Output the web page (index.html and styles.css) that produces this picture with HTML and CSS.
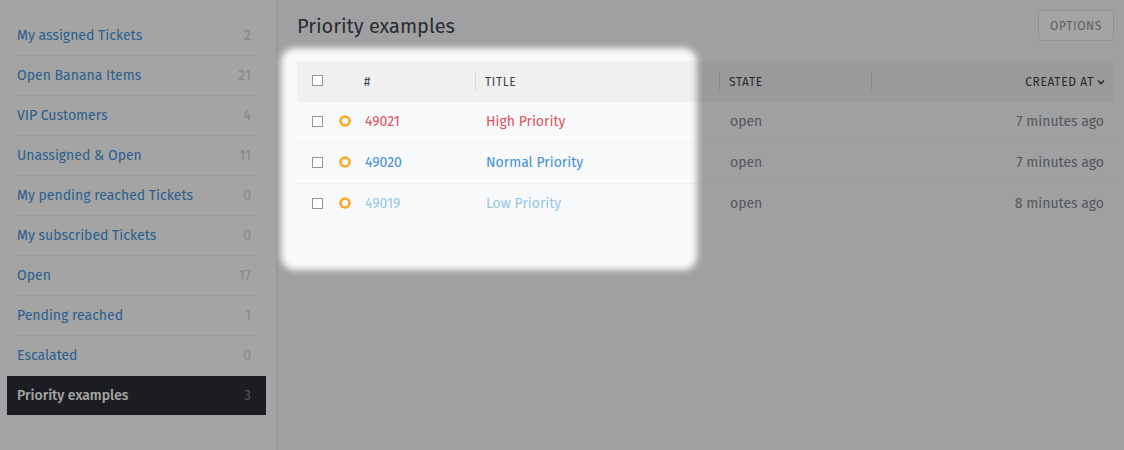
FILE: index.html
```html
<!DOCTYPE html>
<html lang="en">
<head>
<meta charset="utf-8">
<meta name="viewport" content="width=device-width, initial-scale=1">
<title>Priority examples</title>
<link rel="stylesheet" href="styles.css">
</head>
<body>
<div class="app">
  <nav class="sidebar" aria-label="Overviews">
    <ul class="overviews">
      <li><a class="overview" href="#assigned"><span>My assigned Tickets</span><span class="count">2</span></a></li>
      <li><a class="overview" href="#banana"><span>Open Banana Items</span><span class="count">21</span></a></li>
      <li><a class="overview" href="#vip"><span>VIP Customers</span><span class="count">4</span></a></li>
      <li><a class="overview" href="#unassigned"><span>Unassigned &amp; Open</span><span class="count">11</span></a></li>
      <li><a class="overview" href="#pending"><span>My pending reached Tickets</span><span class="count">0</span></a></li>
      <li><a class="overview" href="#subscribed"><span>My subscribed Tickets</span><span class="count">0</span></a></li>
      <li><a class="overview" href="#open"><span>Open</span><span class="count">17</span></a></li>
      <li><a class="overview" href="#reached"><span>Pending reached</span><span class="count">1</span></a></li>
      <li><a class="overview" href="#escalated"><span>Escalated</span><span class="count">0</span></a></li>
      <li><a class="overview is-active" href="#priority" aria-current="page"><span>Priority examples</span><span class="count">3</span></a></li>
    </ul>
  </nav>
  <main class="main">
    <header class="page-header">
      <h1 class="page-title">Priority examples</h1>
      <button class="options" type="button">Options</button>
    </header>
    <table class="tickets">
      <colgroup>
        <col class="col-check"><col class="col-icon"><col class="col-number"><col class="col-title"><col class="col-state"><col>
      </colgroup>
      <thead>
        <tr>
          <th class="check-cell"><input class="check" type="checkbox" aria-label="Select all tickets"></th>
          <th class="icon-cell"></th>
          <th class="divided">#</th>
          <th class="divided">Title</th>
          <th class="divided">State</th>
          <th class="created">Created at<svg class="sort" viewBox="0 0 8 6" aria-hidden="true"><path d="M1 1.5 4 4.5 7 1.5"/></svg></th>
        </tr>
      </thead>
      <tbody>
        <tr>
          <td class="check-cell"><input class="check" type="checkbox" aria-label="Select ticket 49021"></td>
          <td class="icon-cell"><svg class="status" viewBox="0 0 12 12" aria-label="open"><circle cx="6" cy="6" r="4.5"/></svg></td>
          <td><a class="high" href="#49021">49021</a></td>
          <td><a class="high" href="#49021">High Priority</a></td>
          <td>open</td>
          <td class="created">7 minutes ago</td>
        </tr>
        <tr>
          <td class="check-cell"><input class="check" type="checkbox" aria-label="Select ticket 49020"></td>
          <td class="icon-cell"><svg class="status" viewBox="0 0 12 12" aria-label="open"><circle cx="6" cy="6" r="4.5"/></svg></td>
          <td><a class="normal" href="#49020">49020</a></td>
          <td><a class="normal" href="#49020">Normal Priority</a></td>
          <td>open</td>
          <td class="created">7 minutes ago</td>
        </tr>
        <tr>
          <td class="check-cell"><input class="check" type="checkbox" aria-label="Select ticket 49019"></td>
          <td class="icon-cell"><svg class="status" viewBox="0 0 12 12" aria-label="open"><circle cx="6" cy="6" r="4.5"/></svg></td>
          <td><a class="low" href="#49019">49019</a></td>
          <td><a class="low" href="#49019">Low Priority</a></td>
          <td>open</td>
          <td class="created">8 minutes ago</td>
        </tr>
      </tbody>
    </table>
    <div class="spotlight" aria-hidden="true"></div>
  </main>
</div>
</body>
</html>
```
FILE: styles.css
```css
* { box-sizing: border-box; }

body {
  margin: 0;
  color: #868a8e;
  font: 14px/20px "Fira Sans", "Noto Sans", sans-serif;
}

a { text-decoration: none; }

.app {
  position: relative;
  display: flex;
  min-height: 100vh;
  overflow: hidden;
}

.sidebar {
  flex: none;
  width: 277px;
  padding: 16px 10px 16px 7px;
  background: #fff;
  border-right: 1px solid #e4e5e6;
}

.overviews {
  margin: 0;
  padding: 0;
  list-style: none;
}

.overview {
  display: flex;
  justify-content: space-between;
  height: 40px;
  margin: 0 10px 0 9px;
  padding: 10px 5px 9px 1px;
  border-bottom: 1px solid #f0f0f0;
  color: #4396e0;
}

.count { color: #d2d2d2; }

.overview.is-active {
  height: 39px;
  margin: 0;
  padding: 10px 15px 9px 10px;
  background: #2c2d36;
  border: 0;
  color: #fff;
  font-weight: 500;
}

.is-active .count {
  color: #84858b;
  font-weight: 400;
}

li:nth-last-child(2) .overview { border-color: transparent; }

.main {
  flex: 1;
  min-width: 0;
  padding: 10px 10px 20px 20px;
  background: #f8f9fb;
}

.page-header {
  display: flex;
  align-items: center;
  justify-content: space-between;
  margin-bottom: 20px;
}

.page-title {
  margin: 0;
  color: #45484f;
  font-size: 20px;
  font-weight: 400;
}

.options {
  height: 31px;
  padding: 0 11px;
  background: #fff;
  border: 1px solid #e2e2e4;
  border-radius: 4px;
  color: #96989b;
  font: 12px/16px "Fira Sans", "Noto Sans", sans-serif;
  letter-spacing: 0.05em;
  text-transform: uppercase;
}

.tickets {
  width: 100%;
  border-collapse: separate;
  border-spacing: 0;
  table-layout: fixed;
}

.col-check { width: 40px; }
.col-icon { width: 18px; }
.col-number { width: 121px; }
.col-title { width: 244px; }
.col-state { width: 152px; }

.tickets th,
.tickets td {
  height: 41px;
  padding: 0 10px;
  text-align: left;
}

.tickets th {
  padding-left: 9px;
  background: #f0f0f1;
  color: #3e4248;
  font-size: 12px;
  font-weight: 400;
  letter-spacing: 0.05em;
  text-transform: uppercase;
}

.tickets td { border-bottom: 1px solid #f0f1f2; }
.tickets tr:last-child td { border-bottom-color: transparent; }

.tickets .divided {
  background: linear-gradient(#d9dadb, #d9dadb) right 10px / 1px 20px no-repeat #f0f0f1;
}

.tickets .created { text-align: right; }
.tickets th.created { padding-right: 9px; }

.tickets .check-cell { padding: 0 0 2px 15px; }
.tickets .icon-cell { padding: 0 0 2px; }

.check {
  display: block;
  width: 11px;
  height: 11px;
  margin: 0;
  appearance: none;
  background: #fff;
  border: 1px solid #949596;
}

.status {
  display: block;
  width: 12px;
  height: 12px;
  margin-left: 2px;
  fill: none;
  stroke: #faab22;
  stroke-width: 2.6;
}

.sort {
  width: 8px;
  height: 6px;
  margin-left: 3px;
  vertical-align: 1px;
  fill: none;
  stroke: currentColor;
  stroke-width: 1.6;
}

.high { color: #dc5560; }
.normal { color: #4590d6; }
.low { color: #96c8ea; }

/* Highlighted region with a soft edge; everything around it is dimmed. */
.spotlight {
  position: absolute;
  top: 48px;
  left: 281px;
  width: 416px;
  height: 222px;
  border-radius: 14px;
  box-shadow: 0 0 0 2000px rgba(0, 0, 0, 0.355);
  filter: blur(3px);
  pointer-events: none;
}
```
